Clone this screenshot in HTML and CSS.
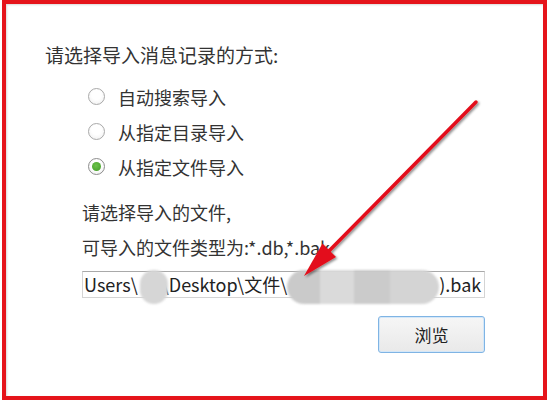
FILE: index.html
```html
<!DOCTYPE html>
<html lang="zh-CN">
<head>
    <meta charset="UTF-8">
    <meta name="viewport" content="width=device-width, initial-scale=1.0">
    <title>导入消息记录</title>
    <link rel="stylesheet" href="styles.css">
</head>
<body>
    <div class="frame">
        <div class="content">
            <div class="title">请选择导入消息记录的方式:</div>

            <!-- 导入方式 -->
            <div class="options">
                <label class="option"><span class="radio"></span>自动搜索导入</label>
                <label class="option"><span class="radio"></span>从指定目录导入</label>
                <label class="option"><span class="radio checked"></span>从指定文件导入</label>
            </div>

            <!-- 文件选择 -->
            <div class="file-box">
                <div class="hint">请选择导入的文件,</div>
                <div class="hint">可导入的文件类型为:*.db,*.bak</div>
                <div class="path">Users\<span class="blob blob-a"></span>\Desktop\文件\<span class="blob blob-b"></span>).bak</div>
                <div class="actions">
                    <button class="btn">浏览</button>
                </div>
            </div>
        </div>

        <!-- 标注箭头 -->
        <svg class="arrow" width="550" height="400" viewBox="0 0 550 400">
            <defs>
                <filter id="shadow" x="-20%" y="-20%" width="140%" height="140%">
                    <feDropShadow dx="1.5" dy="1.5" stdDeviation="1.2" flood-color="#000" flood-opacity="0.45"/>
                </filter>
            </defs>
            <g filter="url(#shadow)">
                <line x1="476" y1="102" x2="326" y2="254" stroke="#e3101a" stroke-width="3.5" stroke-linecap="round"/>
                <polygon points="304,276 322.5,243.5 336,257" fill="#e3101a"/>
            </g>
        </svg>
    </div>
</body>
</html>
```

FILE: styles.css
```css
body{
    margin: 0;
    background-color: #fff;
    font-family: "Noto Sans CJK SC", "Noto Sans", sans-serif;
    color: #333;
}
.frame{
    position: relative;
    box-sizing: border-box;
    width: 545px;
    height: 400px;
    margin-left: 2px;
    border: 4px solid #e5141b;
    box-shadow: inset 1px 1px 2px rgba(0, 0, 0, 0.15);
    overflow: hidden;
}
.content{
    padding: 39px 0 0 39px;
}
.title{
    font-size: 19px;
    line-height: 24px;
}
.options{
    margin: 12px 0 0 43px;
}
.option{
    display: flex;
    align-items: center;
    gap: 13px;
    height: 35px;
    font-size: 18px;
}
.radio{
    position: relative;
    box-sizing: border-box;
    width: 17px;
    height: 17px;
    border: 1px solid #a9a9a9;
    border-radius: 50%;
    background: radial-gradient(circle at 50% 40%, #fff 40%, #ececec 100%);
}
.radio.checked{
    border-color: #8d8d8d;
}
.radio.checked::after{
    content: "";
    position: absolute;
    left: 3px;
    top: 3px;
    width: 9px;
    height: 9px;
    border-radius: 50%;
    background: radial-gradient(circle at 45% 40%, #6cc24a 0, #3f9a25 100%);
}
.file-box{
    width: 403px;
    margin: 11px 0 0 37px;
}
.hint{
    font-size: 18px;
    line-height: 35px;
    color: #333;
}
.path{
    box-sizing: border-box;
    height: 27px;
    margin-top: 6px;
    padding-left: 1px;
    border: 1px solid #d4d4d4;
    border-top-color: #a9a9a9;
    font-size: 18px;
    line-height: 24px;
    color: #222;
    white-space: nowrap;
    overflow: visible;
}
.blob{
    display: inline-block;
    vertical-align: middle;
    margin: -6px 0;
    height: 34px;
    border-radius: 17px;
    filter: blur(1px);
}
.blob-a{
    position: relative;
    width: 28px;
    margin-left: 2px;
    margin-right: -6px;
    background-color: #d6d6d6;
}
.blob-b{
    width: 152px;
    margin-left: 0;
    background: linear-gradient(90deg, #cacaca 0 22%, #dadada 22% 44%, #cbcbcb 44% 68%, #d4d4d4 68%);
}
.actions{
    display: flex;
    justify-content: flex-end;
    margin-top: 18px;
}
.btn{
    width: 107px;
    height: 37px;
    border: 1px solid #7fb4e4;
    border-radius: 3px;
    background: linear-gradient(#f6f6f6, #e9e9e9);
    box-shadow: inset 0 0 0 1px #d4e7f8;
    font-family: "Noto Sans CJK SC", sans-serif;
    font-size: 17px;
    color: #222;
}
.arrow{
    position: absolute;
    left: -6px;
    top: -4px;
    pointer-events: none;
}
```
